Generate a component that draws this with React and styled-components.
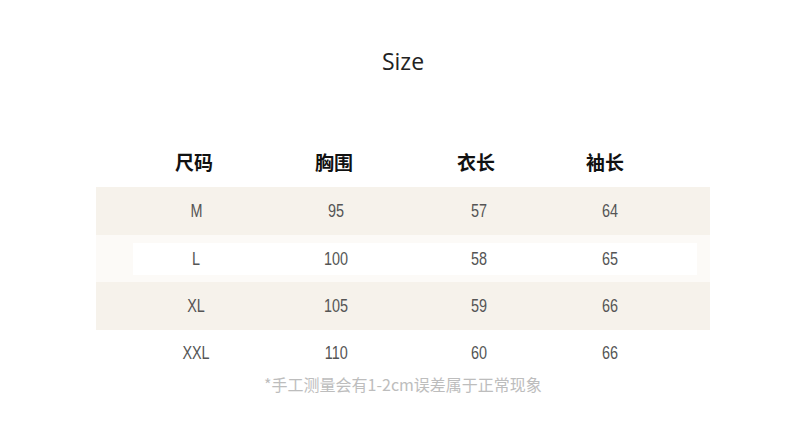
import React from "react";
import styled, { createGlobalStyle } from "styled-components";

const GlobalStyle = createGlobalStyle`
  body {
    margin: 0;
    background: #fff;
  }
`;

const Page = styled.div`
  width: 790px;
  height: 421px;
  box-sizing: border-box;
  padding: 46px 0 0 16px;
  display: flex;
  flex-direction: column;
  align-items: center;
`;

const Title = styled.h1`
  margin: 0;
  font-family: "Open Sans", sans-serif;
  font-weight: 400;
  font-size: 23px;
  line-height: 30px;
  color: #222;
`;

const Table = styled.div`
  width: 614px;
  margin-top: 65px;
  display: flex;
  flex-direction: column;
`;

const Row = styled.div`
  display: grid;
  grid-template-columns: 140px 140px 146px 116px;
  padding-left: 30px;
  align-items: center;
  height: ${(p) => p.$h || 47}px;
  background: ${(p) =>
    p.$tone === "band"
      ? "#f6f2eb"
      : p.$tone === "soft"
      ? "linear-gradient(#fff, #fff) 37px 8px / 564px 32px no-repeat, #fcfaf7"
      : "transparent"};
`;

const HeadRow = styled(Row)`
  height: 40px;
  margin-bottom: 6px;
`;

const HeadCell = styled.div`
  text-align: center;
  font-family: "Noto Sans CJK SC", sans-serif;
  font-weight: 700;
  font-size: 19px;
  color: #111;
  margin-left: ${(p) => p.$shift || 0}px;
`;

const Cell = styled.div`
  text-align: center;
  padding-top: 1px;
`;

const Value = styled.span`
  display: inline-block;
  font-family: "Liberation Sans", sans-serif;
  font-size: 18px;
  color: #555;
  transform: scaleX(0.8);
`;

const Note = styled.p`
  margin: 0;
  font-family: "Noto Sans CJK SC", sans-serif;
  font-size: 16px;
  line-height: 18px;
  color: #bdbdbd;
`;

const headers = ["尺码", "胸围", "衣长", "袖长"];
const shifts = [-4, -4, -6, -10];

const rows = [
  { tone: "band", h: 48, v: ["M", "95", "57", "64"] },
  { tone: "soft", h: 47, v: ["L", "100", "58", "65"] },
  { tone: "band", h: 48, v: ["XL", "105", "59", "66"] },
  { tone: "none", h: 45, v: ["XXL", "110", "60", "66"] },
];

export default function App() {
  return (
    <>
      <GlobalStyle />
      <Page>
        <Title>Size</Title>
        <Table>
          <HeadRow>
            {headers.map((h, i) => (
              <HeadCell key={h} $shift={shifts[i]}>
                {h}
              </HeadCell>
            ))}
          </HeadRow>
          {rows.map((r) => (
            <Row key={r.v[0]} $tone={r.tone} $h={r.h}>
              {r.v.map((v, i) => (
                <Cell key={i}>
                  <Value>{v}</Value>
                </Cell>
              ))}
            </Row>
          ))}
        </Table>
        <Note>*手工测量会有1-2cm误差属于正常现象</Note>
      </Page>
    </>
  );
}
